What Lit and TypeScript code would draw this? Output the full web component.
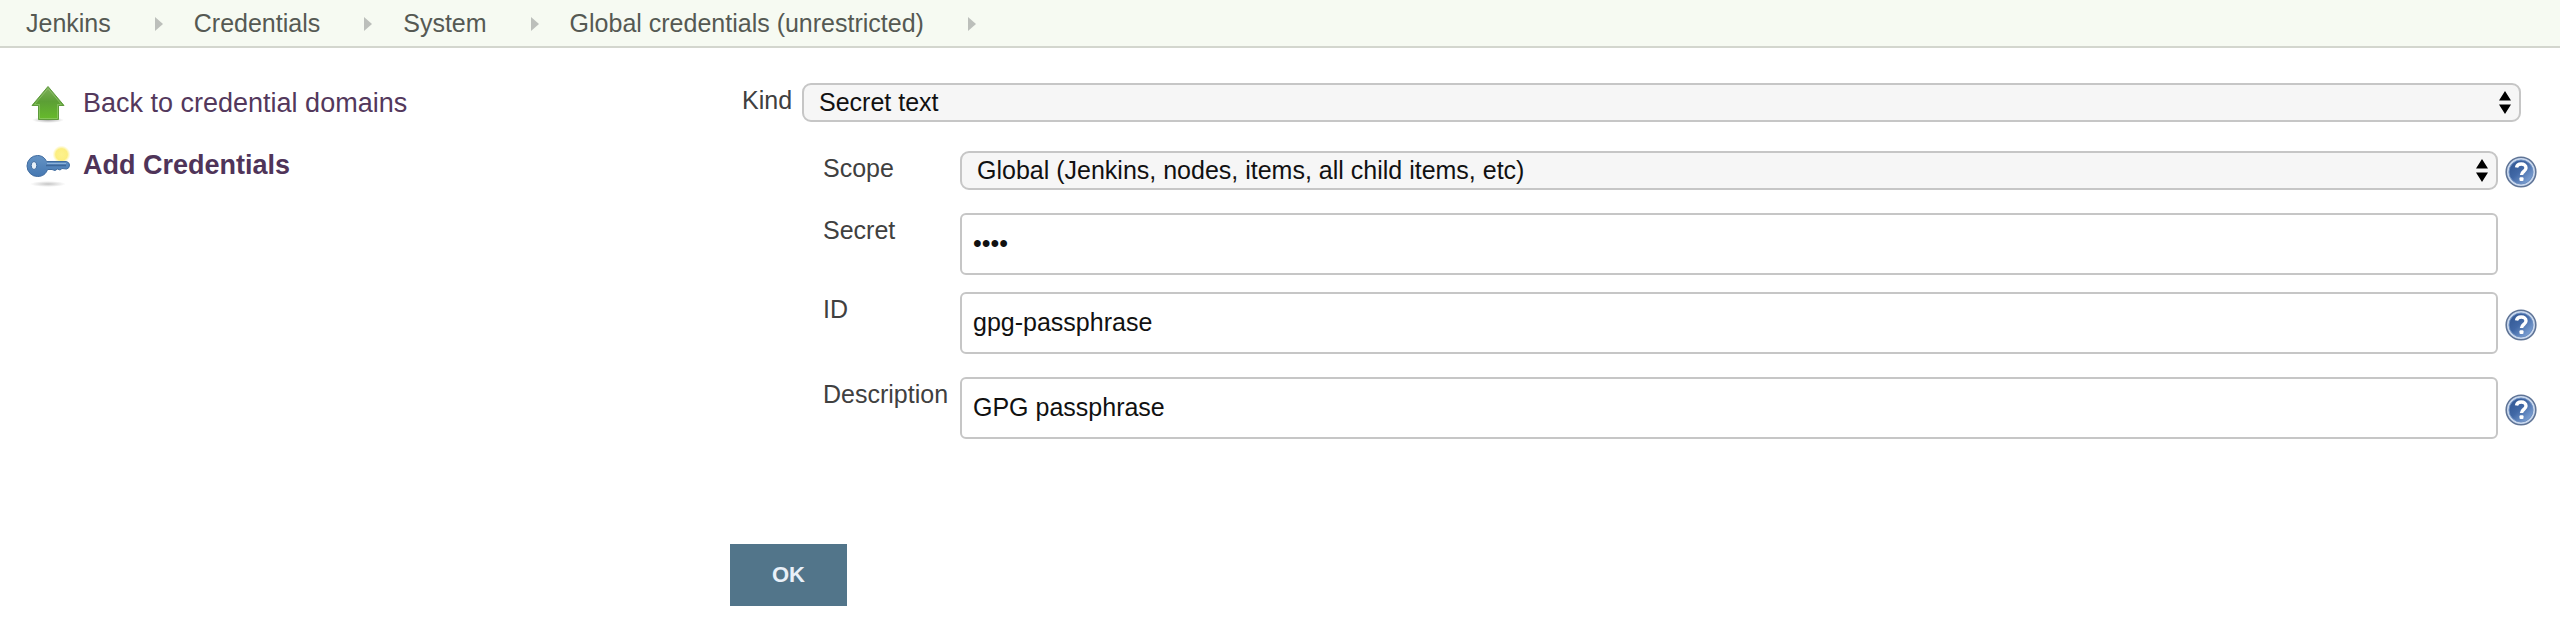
import { LitElement, html, css, svg, nothing } from "lit";
import { customElement, property } from "lit/decorators.js";

@customElement("bread-crumbs")
class BreadCrumbs extends LitElement {
  static styles = css`
    :host { display: block; background: #f6faf2; border-bottom: 2px solid #d3d6ce; }
    .list { display: flex; align-items: center; margin: 0; padding: 0 26px; height: 46px; list-style: none; }
    .item { display: flex; align-items: center; }
    .link { padding-bottom: 1px; color: #555953; text-decoration: none; font-size: 25px; line-height: 28px; white-space: nowrap; }
    .arrow { display: block; width: 8px; height: 14px; margin: 2px 31px 0 44px; fill: #bcbfbb; }
  `;
  private crumbs = ["Jenkins", "Credentials", "System", "Global credentials (unrestricted)"];
  render() {
    return html`<nav aria-label="Breadcrumb"><ul class="list">
      ${this.crumbs.map((c) => html`<li class="item"><a class="link" href="#">${c}</a><svg class="arrow" viewBox="0 0 8 14" aria-hidden="true"><path d="M0 0L8 7L0 14Z" /></svg></li>`)}
    </ul></nav>`;
  }
}

@customElement("side-tasks")
class SideTasks extends LitElement {
  static styles = css`
    :host { display: block; }
    .task { display: flex; align-items: center; height: 62px; color: #53385c; font-size: 27px; line-height: 30px; text-decoration: none; white-space: nowrap; }
    .current { font-weight: bold; color: #4f3459; }
    .icon { display: block; width: 48px; height: 48px; margin-right: 11px; flex: none; }
  `;
  render() {
    return html`<nav aria-label="Tasks">
      <a class="task" href="#">
        <svg class="icon" viewBox="0 0 48 48" aria-hidden="true">
          <defs>
            <linearGradient id="up" x1="0" y1="0" x2="0" y2="1"><stop offset="0" stop-color="#7fae5c" /><stop offset=".45" stop-color="#5c9f35" /><stop offset="1" stop-color="#66bb2b" /></linearGradient>
            <radialGradient id="upShade"><stop offset="0" stop-color="#777" stop-opacity=".6" /><stop offset="1" stop-color="#888" stop-opacity="0" /></radialGradient>
          </defs>
          <ellipse cx="24" cy="41" rx="16" ry="3" fill="url(#upShade)" />
          <path d="M24 7.500L40 26.500H34.500V40.500H14.500V26.500H8Z" fill="url(#up)" stroke="#5e9a3c" stroke-width="1" stroke-linejoin="round" />
          <path d="M24 9.500L37.500 25.500H33.500V39.500H15.500V25.500H10.500Z" fill="none" stroke="#a5d383" stroke-opacity=".5" />
        </svg>
        <span>Back to credential domains</span>
      </a>
      <a class="task current" href="#" aria-current="page">
        <svg class="icon" viewBox="0 0 48 48" aria-hidden="true">
          <defs>
            <linearGradient id="key" x1="0" y1="0" x2="0" y2="1"><stop offset="0" stop-color="#6593c4" /><stop offset="1" stop-color="#4678b2" /></linearGradient>
            <radialGradient id="sun"><stop offset="0" stop-color="#fdf28c" /><stop offset=".65" stop-color="#fcee80" /><stop offset="1" stop-color="#fdf4a8" stop-opacity="0" /></radialGradient>
            <radialGradient id="keyShade"><stop offset="0" stop-color="#888" stop-opacity=".5" /><stop offset="1" stop-color="#999" stop-opacity="0" /></radialGradient>
          </defs>
          <ellipse cx="24" cy="43" rx="18" ry="3" fill="url(#keyShade)" />
          <circle cx="37.500" cy="13.500" r="9" fill="url(#sun)" />
          <path d="M13.500 14.500C18 14.500 21 17 22.500 20.500H42.500Q45.500 21.500 45.500 24Q45.500 27.500 42.500 28L38 27.500L36 29L33.500 28L31 29.500L28 28.500H23.500C22 33 18.500 35.500 13.500 35.500A10.500 10.500 0 0 1 13.500 14.500Z" fill="url(#key)" stroke="#3f6b9f" stroke-width="1" />
          <path d="M22 24.500H42" stroke="#3d6799" stroke-width="1.500" />
          <path d="M23 22.500H42" stroke="#8db2da" stroke-width="1" />
          <ellipse cx="10" cy="24.500" rx="2.800" ry="4" fill="#e8f0f8" stroke="#3f6b9f" />
        </svg>
        <span>Add Credentials</span>
      </a>
    </nav>`;
  }
}

@customElement("help-button")
class HelpButton extends LitElement {
  @property() topic = "";
  static styles = css`
    :host { display: block; }
    .button { display: block; width: 32px; height: 32px; padding: 0; border: 0; background: none; cursor: pointer; }
    .icon { display: block; width: 32px; height: 32px; }
  `;
  render() {
    return html`<button class="button" type="button" aria-label="Help for ${this.topic}">
      <svg class="icon" viewBox="0 0 32 32" aria-hidden="true">
        <defs><linearGradient id="ball" x1="0" y1="0" x2="1" y2="1"><stop offset="0" stop-color="#2f548f" /><stop offset=".45" stop-color="#4168a6" /><stop offset="1" stop-color="#8fb2e2" /></linearGradient></defs>
        <circle cx="16" cy="16" r="14.800" fill="#c9d8ee" stroke="#5f7496" stroke-width="1.600" />
        <circle cx="16" cy="16" r="12" fill="url(#ball)" stroke="#6d8fc2" stroke-width="1" />
        <path d="M11.500 11.500C12 8.800 14 8 16.200 8C19 8 21 9.600 21 12C21 15.200 16.500 15.500 16.500 19" fill="none" stroke="#fff" stroke-width="3.400" />
        <rect x="14.500" y="21.300" width="4" height="3.700" rx="1" fill="#fff" />
      </svg>
    </button>`;
  }
}

@customElement("app-root")
class AppRoot extends LitElement {
  static styles = css`
    :host { display: block; background: #fff; color: #404040; font-family: "Liberation Sans", Arial, Helvetica, sans-serif; font-size: 25px; line-height: 28px; }
    .layout { display: grid; grid-template-columns: 730px minmax(0, 1fr); padding: 24px 0 20px; }
    .side { padding: 0 24px; }
    .form { padding-top: 11px; }
    .kind { display: grid; grid-template-columns: 60px minmax(0, 1fr); padding: 0 39px 0 12px; margin-bottom: 29px; }
    .row { display: grid; grid-template-columns: 137px minmax(0, 1fr) 62px; padding-left: 93px; margin-bottom: 23px; }
    .plain { margin-bottom: 17px; }
    .last { margin-bottom: 105px; }
    .label { padding-top: 3px; white-space: nowrap; }
    .picker { position: relative; }
    .select, .input { display: block; box-sizing: border-box; width: 100%; margin: 0; border: 2px solid #c6c6c6; color: #111; font: inherit; }
    .select { appearance: none; height: 39px; padding: 0 32px 1px 15px; border-radius: 9px; background: #f6f6f6; }
    .input { height: 62px; padding: 0 11px 2px; border-radius: 6px; background: #fff; }
    .marks { position: absolute; right: 10px; top: 8px; width: 12px; height: 23px; pointer-events: none; }
    .help { align-self: center; padding: 3px 0 0 7px; }
    .submit { display: block; width: 117px; height: 62px; padding: 0; border: 0; background: #52758a; color: #e9f0f8; font: bold 22px/28px "Liberation Sans", Arial, sans-serif; cursor: pointer; }
  `;

  private picker(id: string, text: string) {
    return html`<div class="picker">
      <select class="select" id=${id}><option>${text}</option></select>
      <svg class="marks" viewBox="0 0 12 23" aria-hidden="true">${svg`<path d="M6 0L12 9.500H0ZM6 23L12 13.500H0Z" />`}</svg>
    </div>`;
  }

  private row(id: string, label: string, control: unknown, help: boolean, extra = "") {
    return html`<div class="row ${extra}">
      <label class="label" for=${id}>${label}</label>
      ${control}
      ${help ? html`<help-button class="help" topic=${label}></help-button>` : nothing}
    </div>`;
  }

  private input(id: string, type: string, value: string) {
    return html`<input class="input" id=${id} type=${type} .value=${value} autocomplete="off" />`;
  }

  render() {
    return html`
      <bread-crumbs></bread-crumbs>
      <div class="layout">
        <side-tasks class="side"></side-tasks>
        <form class="form" @submit=${(e: Event) => e.preventDefault()}>
          <div class="kind">
            <label class="label" for="kind">Kind</label>
            ${this.picker("kind", "Secret text")}
          </div>
          ${this.row("scope", "Scope", this.picker("scope", "Global (Jenkins, nodes, items, all child items, etc)"), true)}
          ${this.row("secret", "Secret", this.input("secret", "password", "pass"), false, "plain")}
          ${this.row("cid", "ID", this.input("cid", "text", "gpg-passphrase"), true)}
          ${this.row("description", "Description", this.input("description", "text", "GPG passphrase"), true, "last")}
          <button class="submit" type="submit">OK</button>
        </form>
      </div>
    `;
  }
}
